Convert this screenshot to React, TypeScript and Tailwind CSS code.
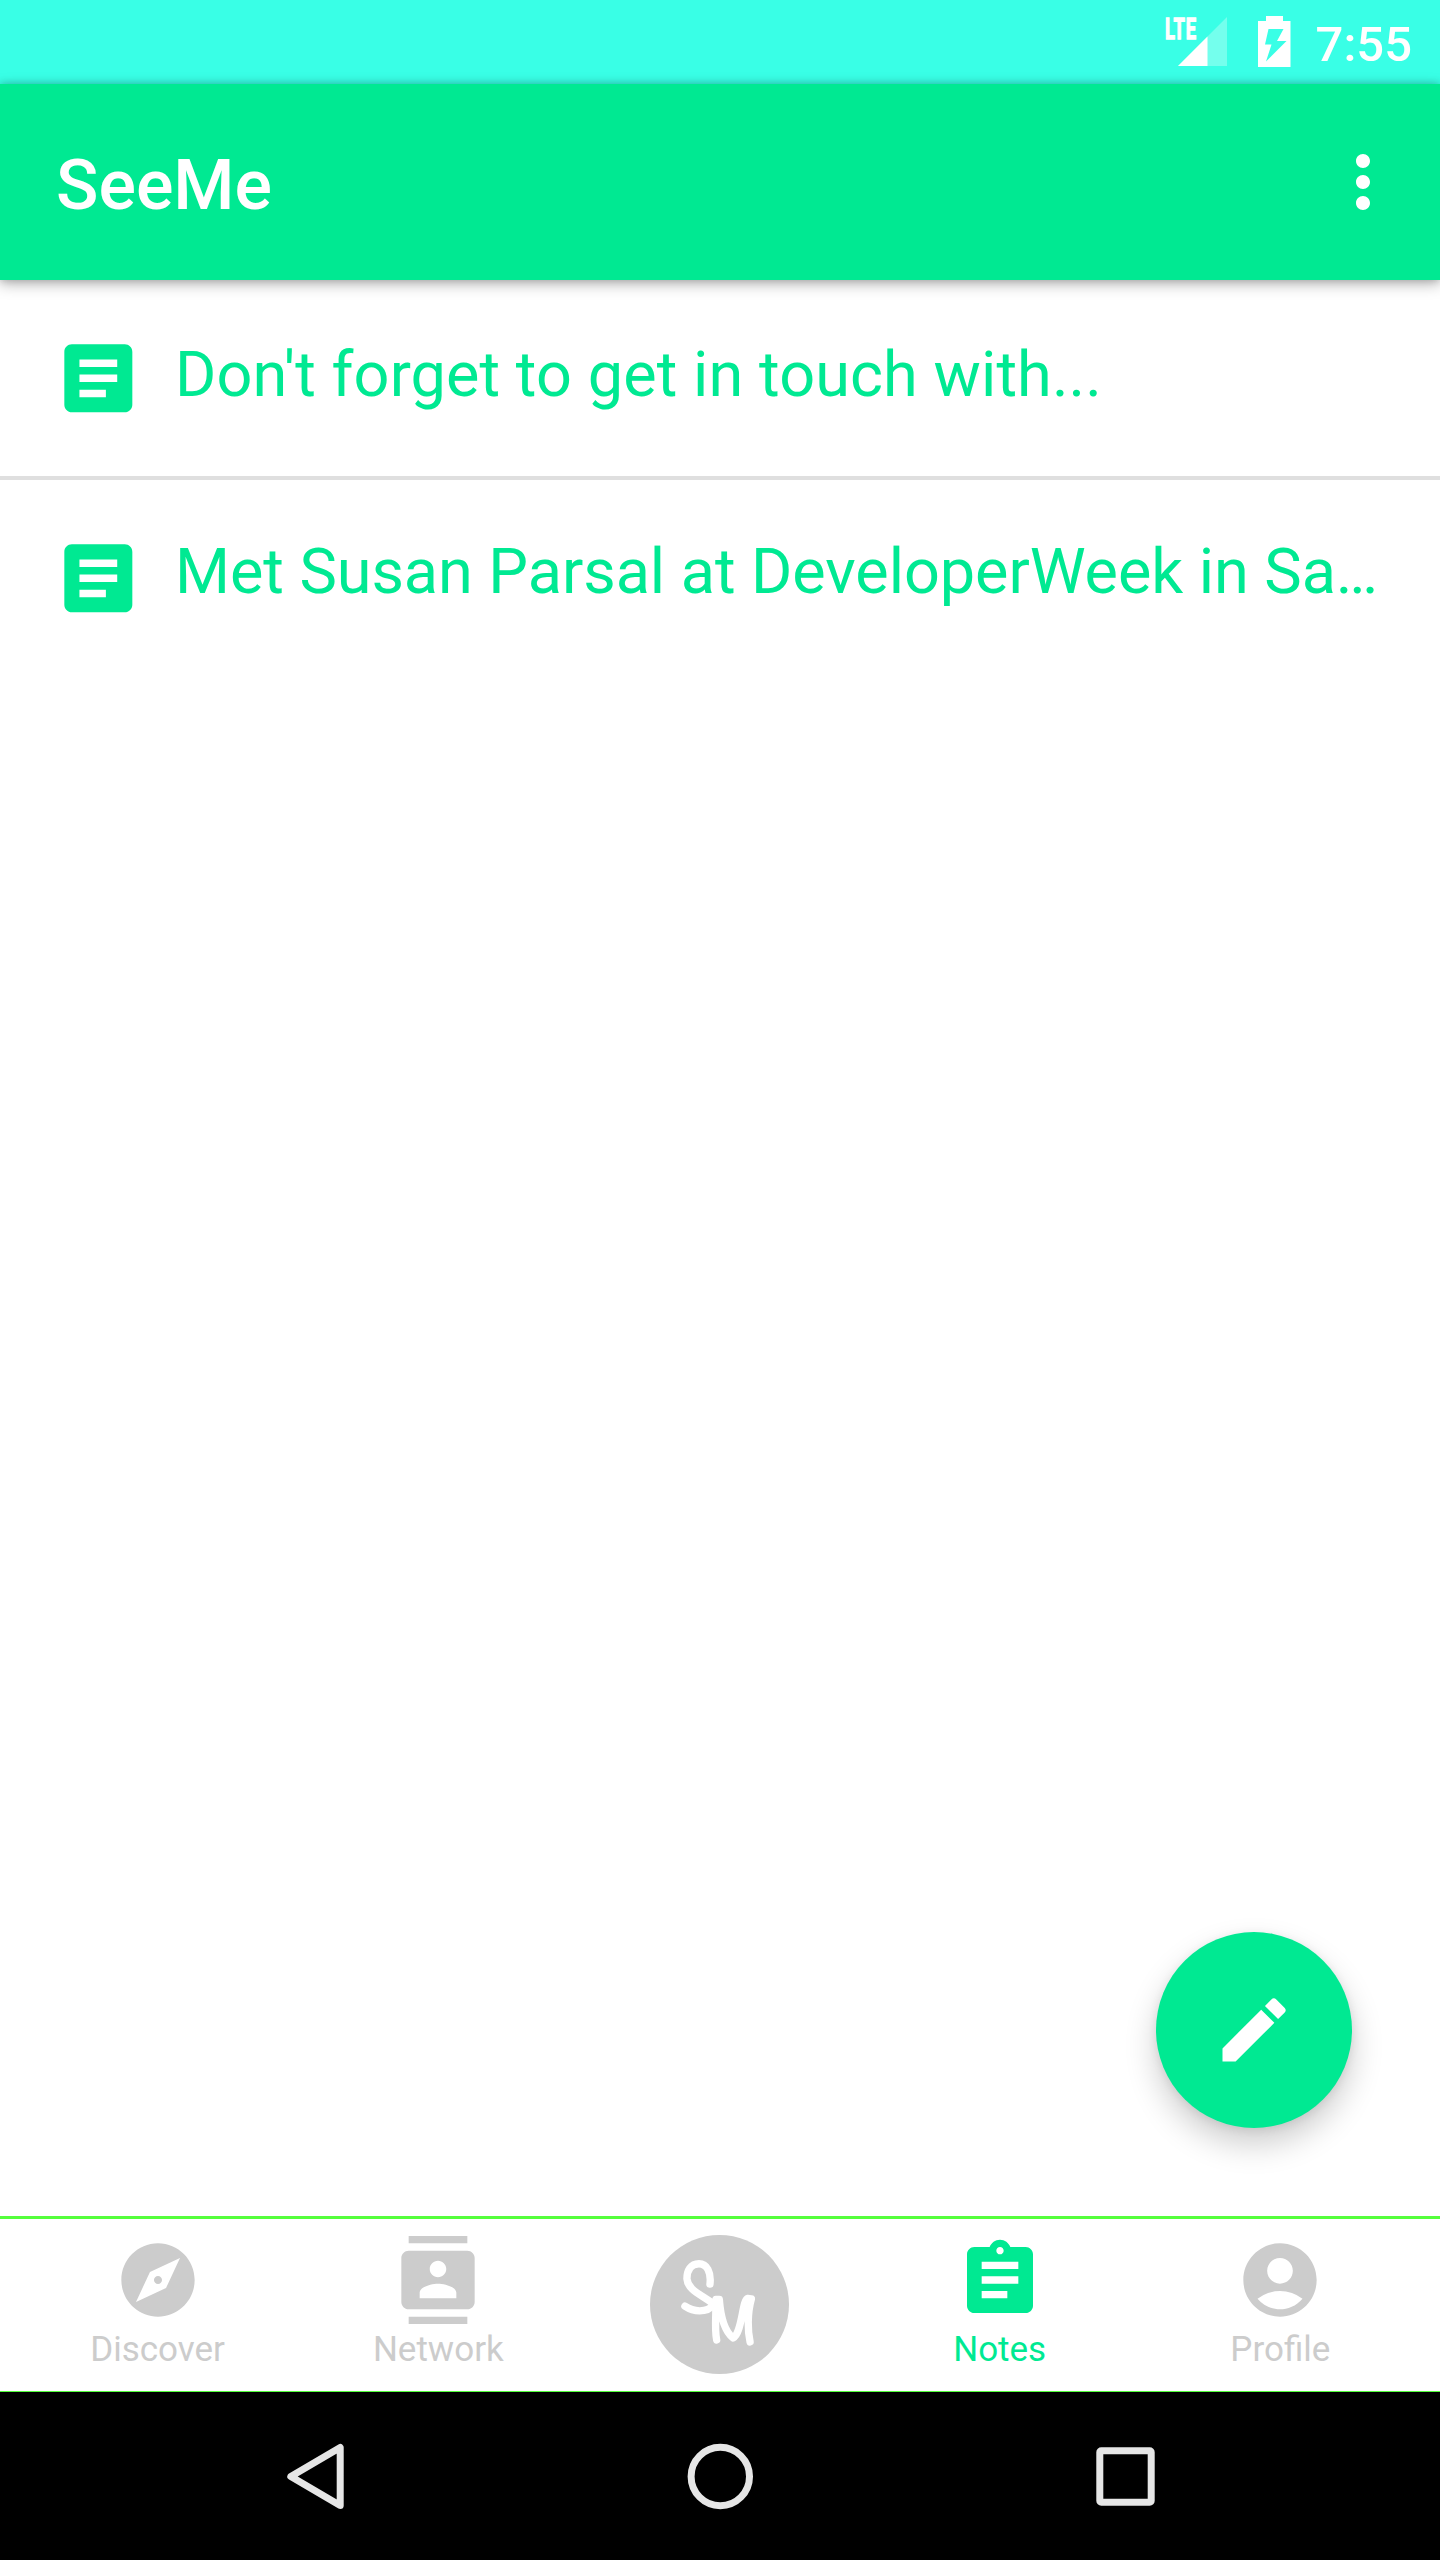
import type { ReactNode } from "react";
import {
  MdAccountCircle,
  MdArticle,
  MdAssignment,
  MdContacts,
  MdEdit,
  MdExplore,
  MdMoreVert,
} from "react-icons/md";

function StatusBar() {
  return (
    <div className="flex h-[84px] shrink-0 items-start justify-end bg-[#39ffe6] pr-[28px] text-white">
      <div className="relative mt-[17px] h-[49px] w-[61px]">
        <span className="absolute left-[-1px] top-[-5px] origin-left scale-x-[0.63] text-[29px] font-bold leading-[34px] tracking-[1.2px] [-webkit-text-stroke:1.4px_white]">
          LTE
        </span>
        <svg className="absolute right-0 top-0 h-[49px] w-[49px]" viewBox="0 0 49 49">
          <path d="M49 0V49H0z" fill="white" fillOpacity="0.3" />
          <path d="M29.5 19.5V49H0z" fill="white" />
        </svg>
      </div>
      <svg className="ml-[31px] mt-[16px] h-[51px] w-[33px]" viewBox="0 0 33 51">
        <path
          fillRule="evenodd"
          fill="white"
          d="M8 0H25V5H32.5V51H0V5H8zM10.5 13L7 28.5H13.5L8 45.5L28.5 25H19L25.5 13z"
        />
      </svg>
      <span className="ml-[25px] mt-[16px] text-[49px] font-medium leading-[58px]">7:55</span>
    </div>
  );
}

function NoteRow({ text, divider }: { text: string; divider?: boolean }) {
  return (
    <div
      className={
        divider
          ? "flex h-[200px] items-start border-b-4 border-[#dfdfdf] pl-[52.67px] pr-[56px]"
          : "flex h-[200px] items-start pl-[52.67px] pr-[56px]"
      }
    >
      <MdArticle className="mt-[52.67px] size-[90.67px] shrink-0" />
      <span
        className={
          divider
            ? "ml-[31.67px] mt-[58px] whitespace-nowrap text-[63px] leading-[74px] tracking-[0.09px]"
            : "ml-[31.67px] mt-[55px] whitespace-nowrap text-[63px] leading-[74px] tracking-[-0.06px]"
        }
      >
        {text}
      </span>
    </div>
  );
}

function Tab({ icon, label, active }: { icon: ReactNode; label: string; active?: boolean }) {
  return (
    <div
      className={
        active
          ? "flex w-[280.7px] flex-col items-center pt-[17px] text-[#00e992]"
          : "flex w-[280.7px] flex-col items-center pt-[17px] text-[#cccccc]"
      }
    >
      {icon}
      <span className="mt-[5px] text-[35px] leading-[41px]">{label}</span>
    </div>
  );
}

function LogoMark() {
  return (
    <svg className="h-[139px] w-[139px]" viewBox="149.5 103 416 416">
      <circle cx="357.5" cy="311" r="208" fill="#cccccc" />
      <g fill="none" stroke="white" strokeWidth="22" strokeLinecap="round" strokeLinejoin="round">
        <path d="M329 250C333 214 320 189 296 189C271 189 260 210 260 234C262 266 300 280 334 305C344 330 290 340 254 316" />
        <path d="M349 417C342 388 348 330 347 296H357C361 350 374 392 398 411C426 396 425 296 442 293L453 294C440 340 442 392 449 423" />
      </g>
    </svg>
  );
}

export default function App() {
  return (
    <div className="flex h-[2560px] w-[1440px] flex-col overflow-hidden bg-white font-[Roboto,sans-serif]">
      <StatusBar />
      <header className="relative z-10 flex h-[196px] shrink-0 items-center justify-between bg-[#00e992] pl-[56px] pr-[35px] text-white shadow-[0_4px_14px_rgba(0,0,0,0.28),0_0_8px_rgba(0,0,0,0.2)]">
        <h1 className="pt-[6px] text-[70px] font-medium leading-[82px]">SeeMe</h1>
        <MdMoreVert className="size-[84px]" />
      </header>

      <main className="relative flex-1 text-[#00e992]">
        <NoteRow text="Don't forget to get in touch with..." divider />
        <NoteRow text="Met Susan Parsal at DeveloperWeek in Sa…" />
        <button className="absolute bottom-[88px] right-[88px] flex size-[196px] items-center justify-center rounded-full bg-[#00e992] text-white shadow-[0_16px_32px_rgba(0,0,0,0.2),0_2px_10px_rgba(0,0,0,0.08)]">
          <MdEdit className="size-[84px]" />
        </button>
      </main>

      <nav className="flex h-[176px] shrink-0 justify-center border-b border-t-3 border-[#55ff3c] pr-[2px]">
        <Tab icon={<MdExplore className="size-[88px]" />} label="Discover" />
        <Tab icon={<MdContacts className="size-[88px]" />} label="Network" />
        <div className="flex w-[280.7px] justify-center pt-[16px]">
          <LogoMark />
        </div>
        <Tab icon={<MdAssignment className="size-[88px]" />} label="Notes" active />
        <Tab icon={<MdAccountCircle className="size-[88px]" />} label="Profile" />
      </nav>

      <div className="flex h-[168px] shrink-0 items-center justify-center gap-[321px] bg-black text-[#e6e6e6]">
        <svg className="size-[84px]" viewBox="0 0 84 84" fill="none" stroke="currentColor" strokeWidth="7">
          <path d="M67.2 13.5V71.5L17.8 42.5z" strokeLinejoin="round" />
        </svg>
        <svg className="size-[84px]" viewBox="0 0 84 84" fill="none" stroke="currentColor" strokeWidth="7">
          <circle cx="42.3" cy="42.5" r="29.2" />
        </svg>
        <svg className="size-[84px]" viewBox="0 0 84 84" fill="currentColor">
          <path
            fillRule="evenodd"
            d="M18.3 13.3H66.7A5 5 0 0 1 71.7 18.3V66.7A5 5 0 0 1 66.7 71.7H18.3A5 5 0 0 1 13.3 66.7V18.3A5 5 0 0 1 18.3 13.3zM20.3 20.3V64.7H64.7V20.3z"
          />
        </svg>
      </div>
    </div>
  );
}
